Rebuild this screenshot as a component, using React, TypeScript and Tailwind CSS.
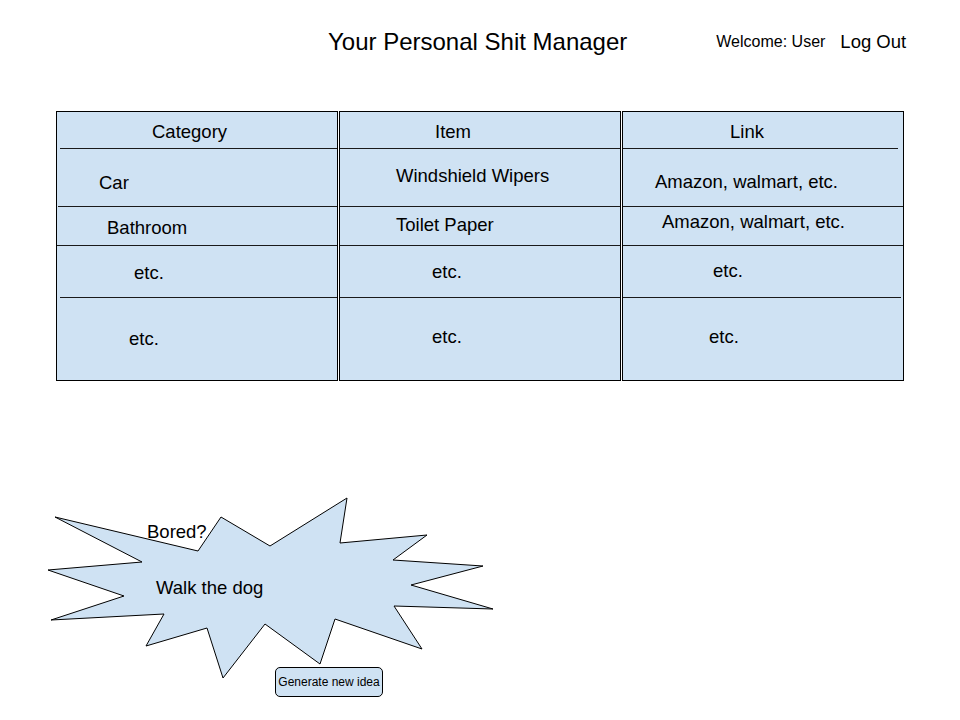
const cellHeights = [36, 57, 38, 51, 82];

type Cell = { text: string; pl: number; pt: number };
type Column = { cells: Cell[]; lines: string[] };

const columns: Column[] = [
  {
    cells: [
      { text: "Category", pl: 95, pt: 10 },
      { text: "Car", pl: 42, pt: 24 },
      { text: "Bathroom", pl: 50, pt: 11 },
      { text: "etc.", pl: 77, pt: 17 },
      { text: "etc.", pl: 72, pt: 31 },
    ],
    lines: ["ml-[3px]", "ml-[1px]", "", "ml-[3px]"],
  },
  {
    cells: [
      { text: "Item", pl: 95, pt: 10 },
      { text: "Windshield Wipers", pl: 56, pt: 17 },
      { text: "Toilet Paper", pl: 56, pt: 8 },
      { text: "etc.", pl: 92, pt: 16 },
      { text: "etc.", pl: 92, pt: 29 },
    ],
    lines: ["", "", "", ""],
  },
  {
    cells: [
      { text: "Link", pl: 107, pt: 10 },
      { text: "Amazon, walmart, etc.", pl: 32, pt: 23 },
      { text: "Amazon, walmart, etc.", pl: 39, pt: 5 },
      { text: "etc.", pl: 90, pt: 15 },
      { text: "etc.", pl: 86, pt: 29 },
    ],
    lines: ["mr-[5px]", "", "", "mr-[2px]"],
  },
];

const cellPad: Record<string, string> = {
  "95-10": "pl-[95px] pt-[10px]",
  "42-24": "pl-[42px] pt-[24px]",
  "50-11": "pl-[50px] pt-[11px]",
  "77-17": "pl-[77px] pt-[17px]",
  "72-31": "pl-[72px] pt-[31px]",
  "56-17": "pl-[56px] pt-[17px]",
  "56-8": "pl-[56px] pt-[8px]",
  "92-16": "pl-[92px] pt-[16px]",
  "92-29": "pl-[92px] pt-[29px]",
  "107-10": "pl-[107px] pt-[10px]",
  "32-23": "pl-[32px] pt-[23px]",
  "39-5": "pl-[39px] pt-[5px]",
  "90-15": "pl-[90px] pt-[15px]",
  "86-29": "pl-[86px] pt-[29px]",
};

const heightClass: Record<number, string> = {
  36: "h-[36px]",
  57: "h-[57px]",
  38: "h-[38px]",
  51: "h-[51px]",
  82: "h-[82px]",
};

const starPoints =
  "55,516 198,550 221,516 270,545 347,497 340,542 427,534 393,559 483,565 411,584 493,608 394,605 422,648 335,618 320,663 265,623 223,677 207,627 146,645 164,613 51,619 124,595 48,569 142,561";

function TableColumn({ col }: { col: Column }) {
  return (
    <div className="flex w-[282px] flex-col border border-black bg-[#cfe2f3]">
      {col.cells.map((cell, i) => (
        <div key={i}>
          {i > 0 && <div className={`h-px bg-[#1a1a1a] ${col.lines[i - 1]}`} />}
          <div
            className={`${heightClass[cellHeights[i]]} ${cellPad[`${cell.pl}-${cell.pt}`]} whitespace-nowrap text-[18.5px] leading-[20px] text-black`}
          >
            {cell.text}
          </div>
        </div>
      ))}
    </div>
  );
}

export default function App() {
  return (
    <div className="h-[720px] w-[960px] overflow-hidden bg-white font-['Liberation_Sans',Arial,sans-serif] text-black">
      {/* Header */}
      <div className="flex h-[84px] items-center pl-[328px]">
        <h1 className="text-[24px] leading-[28px]">Your Personal Shit Manager</h1>
        <span className="ml-[89px] text-[16px] leading-[20px]">Welcome: User</span>
        <button className="ml-[15px] text-[18.5px] leading-[20px]">Log Out</button>
      </div>

      {/* Table */}
      <div className="mt-[27px] flex gap-px pl-[56px]">
        {columns.map((col, i) => (
          <TableColumn key={i} col={col} />
        ))}
      </div>

      {/* Idea burst */}
      <div className="relative mt-[110px] h-[210px]">
        <svg
          className="absolute inset-0"
          width="960"
          height="210"
          viewBox="0 490 960 210"
        >
          <polygon points={starPoints} fill="#cfe2f3" stroke="#000" strokeWidth="1" strokeLinejoin="miter" />
        </svg>
        <div className="relative flex flex-col items-start">
          <p className="ml-[147px] mt-[31px] text-[18.5px] leading-[20px]">Bored?</p>
          <p className="ml-[156px] mt-[36px] text-[18.5px] leading-[20px]">Walk the dog</p>
          <button className="ml-[275px] mt-[69px] flex h-[30px] w-[108px] items-center justify-center rounded-[5px] border border-black bg-[#cfe2f3] text-[12px] leading-none">
            Generate new idea
          </button>
        </div>
      </div>
    </div>
  );
}
